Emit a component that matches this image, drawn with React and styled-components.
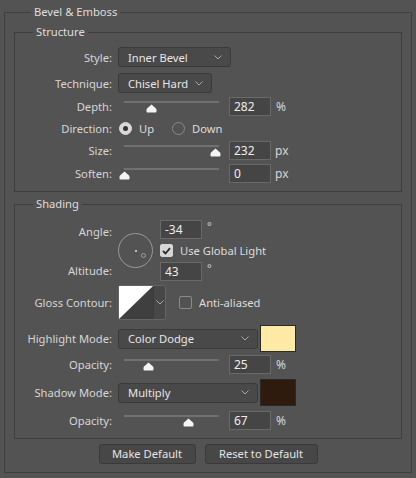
import React from "react";
import styled, { createGlobalStyle } from "styled-components";

const GlobalStyle = createGlobalStyle`
    html, body {
        margin: 0;
        padding: 0;
        background: #535353;
    }
    body {
        font-family: "Noto Sans", "Open Sans", sans-serif;
        font-size: 11.2px;
        color: #d9d9d9;
    }
`

const Panel = styled.fieldset`
    box-sizing: border-box;
    width: 408px;
    margin: 4px 0 0 4px;
    padding: 0 9px 8px 9px;
    border: 1px solid #3e3e3e;
    min-inline-size: 0;
`

const Group = styled.fieldset`
    margin: 4px 0 0 0;
    padding: ${p => p.$pt}px 0 8px 0;
    border: 1px solid #3e3e3e;
    min-inline-size: 0;
`

const Legend = styled.legend`
    margin-left: ${p => p.$ml}px;
    padding: 0 3px;
    line-height: 16px;
    height: 16px;
    color: #dedede;
`

const Row = styled.div`
    display: flex;
    align-items: center;
    height: ${p => p.$h || 20}px;
    margin-top: ${p => p.$mt || 0}px;
`

const Label = styled.span`
    flex-shrink: 0;
    width: 97px;
    margin-right: 6px;
    text-align: right;
    white-space: nowrap;
    color: #d6d6d6;
`

const Select = styled.div`
    box-sizing: border-box;
    display: flex;
    align-items: center;
    justify-content: space-between;
    width: ${p => p.$w}px;
    height: 20px;
    padding: 0 8px 0 9px;
    background: #494949;
    border: 1px solid #3a3a3a;
    border-radius: 3px;
    color: #e6e6e6;
    white-space: nowrap;
`

const Chevron = () => (
    <svg width="8" height="5" viewBox="0 0 8 5">
        <path d="M0.5 0.5 L4 4 L7.5 0.5" fill="none" stroke="#a8a8a8" strokeWidth="1" />
    </svg>
)

const SliderBox = styled.div`
    position: relative;
    align-self: stretch;
    width: 107px;
    flex-shrink: 0;
`

const Track = styled.div`
    margin: 4px 0 0 6px;
    width: 95px;
    height: 2px;
    background: #707070;
`

const Thumb = styled.svg`
    position: absolute;
    top: 7px;
    margin-left: -5px;
`

const NumInput = styled.div`
    box-sizing: border-box;
    width: 42px;
    height: 19px;
    margin-left: 4px;
    padding: 0 4px;
    line-height: 17px;
    font-size: 12px;
    background: #454545;
    border: 1px solid #696969;
    color: #ededed;
`

const Unit = styled.span`
    margin-left: ${p => p.$ml || 5}px;
    font-size: 12px;
    color: #d6d6d6;
`

const Slider = ({ label, value, max, unit, mt }) => (
    <Row $h={19} $mt={mt}>
        <Label>{label}</Label>
        <SliderBox>
            <Track />
            <Thumb width="11" height="9" viewBox="0 0 11 9" style={{ left: 6 + (value / max) * 95 }}>
                <path d="M5.5 0.5 L10 4.5 Q10.5 5 10.5 6 L10.5 7.5 Q10.5 8.5 9.5 8.5 L1.5 8.5 Q0.5 8.5 0.5 7.5 L0.5 6 Q0.5 5 1 4.5 Z" fill="#f4f4f4" />
            </Thumb>
        </SliderBox>
        <NumInput>{value}</NumInput>
        <Unit $ml={unit === "px" ? 4 : 5}>{unit}</Unit>
    </Row>
)

const Radio = styled.span`
    box-sizing: border-box;
    display: inline-flex;
    align-items: center;
    justify-content: center;
    width: 13px;
    height: 13px;
    border-radius: 50%;
    border: 1px solid ${p => (p.$on ? "#d9d9d9" : "#8a8a8a")};
    background: ${p => (p.$on ? "#d9d9d9" : "transparent")};
    margin: 0 7px 0 ${p => p.$ml || 1}px;
    &::after {
        content: "";
        display: ${p => (p.$on ? "block" : "none")};
        width: 5px;
        height: 5px;
        border-radius: 50%;
        background: #333;
    }
`

const Check = styled.span`
    box-sizing: border-box;
    display: inline-flex;
    align-items: center;
    justify-content: center;
    flex-shrink: 0;
    width: 13px;
    height: 13px;
    border-radius: 2px;
    border: 1px solid ${p => (p.$on ? "#d6d6d6" : "#8a8a8a")};
    background: ${p => (p.$on ? "#d6d6d6" : "transparent")};
    margin: 0 7px 0 ${p => p.$ml || 0}px;
`

const CheckMark = () => (
    <svg width="9" height="8" viewBox="0 0 9 8">
        <path d="M1 4 L3.5 6.5 L8 1.2" fill="none" stroke="#2a2a2a" strokeWidth="1.8" />
    </svg>
)

const OptionText = styled.span`
    color: #dcdcdc;
    white-space: nowrap;
`

const AngleGrid = styled.div`
    display: grid;
    grid-template-columns: 103px 42px auto;
    grid-template-rows: 19px 17px 19px;
    row-gap: 3px;
    margin-top: 8px;
`

const GridLabel = styled(Label)`
    grid-column: 1;
    grid-row: ${p => p.$row};
    align-self: center;
    margin-top: ${p => p.$nudge || 0}px;
`

const Dial = styled.div`
    position: relative;
    grid-column: 2;
    grid-row: 1 / 4;
    align-self: center;
    box-sizing: border-box;
    width: 35px;
    height: 35px;
    border-radius: 50%;
    border: 1px solid #9a9a9a;
`

const DialCenter = styled.span`
    position: absolute;
    left: 16px;
    top: 16px;
    width: 2px;
    height: 2px;
    background: #bbb;
`

const DialKnob = styled.span`
    position: absolute;
    box-sizing: border-box;
    width: 5px;
    height: 5px;
    border-radius: 50%;
    border: 1px solid #a0a0a0;
`

const GridCell = styled.div`
    grid-column: 3;
    grid-row: ${p => p.$row};
    display: flex;
    align-items: ${p => p.$align || "center"};
`

const AngleInput = styled(NumInput)`
    margin-left: 0;
`

const Degree = styled.span`
    margin-left: 5px;
    line-height: 12px;
    color: #d6d6d6;
`

const ContourPicker = styled.div`
    display: flex;
    box-sizing: border-box;
    height: 35px;
    border: 1px solid #646464;
    border-radius: 2px;
    background: #474747;
`

const ContourArrow = styled.div`
    display: flex;
    align-items: center;
    justify-content: center;
    width: 11px;
    border-left: 1px solid #3a3a3a;
`

const Swatch = styled.div`
    box-sizing: border-box;
    width: 36px;
    height: 27px;
    margin-left: 2px;
    background: ${p => p.$color};
    border: 1px solid #2a2a2a;
`

const ButtonBar = styled.div`
    display: flex;
    justify-content: center;
    gap: 9px;
    margin-top: 5px;
`

const Button = styled.div`
    box-sizing: border-box;
    width: ${p => p.$w}px;
    height: 20px;
    line-height: 18px;
    text-align: center;
    background: #474747;
    border: 1px solid #3a3a3a;
    border-radius: 3px;
    color: #e4e4e4;
    white-space: nowrap;
`

// angle -34: knob direction drawn on the dial
const angle = -34
const knobX = 17 + Math.cos((angle * Math.PI) / 180) * 8.5 - 2.5
const knobY = 17 - Math.sin((angle * Math.PI) / 180) * 8.5 - 2.5

export default function App() {
    return (
        <>
            <GlobalStyle />
            <Panel>
                <Legend $ml={17}>Bevel &amp; Emboss</Legend>

                <Group $pt={7}>
                    <Legend $ml={18}>Structure</Legend>
                    <Row>
                        <Label>Style:</Label>
                        <Select $w={113}>Inner Bevel<Chevron /></Select>
                    </Row>
                    <Row $mt={6}>
                        <Label>Technique:</Label>
                        <Select $w={94}>Chisel Hard<Chevron /></Select>
                    </Row>
                    <Slider label="Depth:" value={282} max={1000} unit="%" mt={4} />
                    <Row $mt={2}>
                        <Label>Direction:</Label>
                        <Radio $on />
                        <OptionText>Up</OptionText>
                        <Radio $ml={18} />
                        <OptionText>Down</OptionText>
                    </Row>
                    <Slider label="Size:" value={232} max={242} unit="px" mt={3} />
                    <Slider label="Soften:" value={0} max={16} unit="px" mt={4} />
                </Group>

                <Group $pt={0}>
                    <Legend $ml={18}>Shading</Legend>
                    <AngleGrid>
                        <GridLabel $row={1} $nudge={4}>Angle:</GridLabel>
                        <Dial>
                            <DialCenter />
                            <DialKnob style={{ left: knobX, top: knobY }} />
                        </Dial>
                        <GridCell $row={1} $align="flex-start">
                            <AngleInput>{angle}</AngleInput>
                            <Degree>°</Degree>
                        </GridCell>
                        <GridCell $row={2}>
                            <Check $on><CheckMark /></Check>
                            <OptionText>Use Global Light</OptionText>
                        </GridCell>
                        <GridLabel $row={3} $nudge={-2}>Altitude:</GridLabel>
                        <GridCell $row={3} $align="flex-start">
                            <AngleInput>43</AngleInput>
                            <Degree>°</Degree>
                        </GridCell>
                    </AngleGrid>

                    <Row $h={35} $mt={4}>
                        <Label>Gloss Contour:</Label>
                        <ContourPicker>
                            <svg width="34" height="33" viewBox="0 0 34 33">
                                <rect width="34" height="33" fill="#3f3f3f" />
                                <path d="M0 0 L34 0 L0 33 Z" fill="#ffffff" />
                            </svg>
                            <ContourArrow><Chevron /></ContourArrow>
                        </ContourPicker>
                        <Check $ml={13} />
                        <OptionText>Anti-aliased</OptionText>
                    </Row>

                    <Row $h={27} $mt={5}>
                        <Label>Highlight Mode:</Label>
                        <Select $w={140}>Color Dodge<Chevron /></Select>
                        <Swatch $color="#ffeaa5" />
                    </Row>
                    <Slider label="Opacity:" value={25} max={100} unit="%" mt={3} />
                    <Row $h={27} $mt={5}>
                        <Label>Shadow Mode:</Label>
                        <Select $w={140}>Multiply<Chevron /></Select>
                        <Swatch $color="#2e1b0e" />
                    </Row>
                    <Slider label="Opacity:" value={67} max={100} unit="%" mt={5} />
                </Group>

                <ButtonBar>
                    <Button $w={97}>Make Default</Button>
                    <Button $w={113}>Reset to Default</Button>
                </ButtonBar>
            </Panel>
        </>
    );
}
